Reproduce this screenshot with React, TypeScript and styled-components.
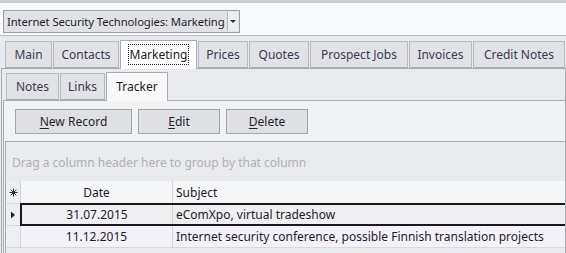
import styled, {createGlobalStyle} from "styled-components";

const GlobalStyle = createGlobalStyle`
  html, body {
    margin: 0;
    padding: 0;
    width: 566px;
    height: 253px;
    overflow: hidden;
    background: #e9eaed;
    font-family: "Noto Sans", "Open Sans", sans-serif;
    font-size: 12px;
    color: #2b2b3a;
  }
`;

const Window = styled.div`
  width: 566px;
  height: 253px;
  display: flex;
  flex-direction: column;
`;

const TopBar = styled.div`
  border-top: 3px solid #c9ccd1;
  border-bottom: 1px solid #b7bac0;
  background: #f8f9fa;
  padding: 7px 0 0 3px;
  box-sizing: border-box;
  height: 36px;
`;

const Combo = styled.div`
  width: 237px;
  height: 23px;
  box-sizing: border-box;
  border: 1px solid #9a9ea6;
  background: #e0e2e6;
  display: flex;
  align-items: center;
`;

const ComboText = styled.span`
  flex: 1;
  padding-left: 3px;
  white-space: nowrap;
  font-size: 11.3px;
  letter-spacing: -0.1px;
  color: #1f1f2e;
`;

const ComboButton = styled.span`
  width: 10px;
  height: 19px;
  margin-right: 1px;
  border-left: 1px solid #b3b6bc;
  background: #eceef1;
  display: flex;
  align-items: center;
  justify-content: center;

  &::after {
    content: "";
    border-left: 3px solid transparent;
    border-right: 3px solid transparent;
    border-top: 3px solid #333;
  }
`;

const TabStrip = styled.div<{ $indent: number; $height: number }>`
  display: flex;
  align-items: flex-end;
  gap: 1px;
  padding-left: ${props => props.$indent}px;
  height: ${props => props.$height}px;
  position: relative;
  z-index: 1;
`;

const Tab = styled.div<{ $active?: boolean; $width: number; $tall: number; $activeBg: string }>`
  width: ${props => props.$width}px;
  height: ${props => props.$active ? props.$tall + 2 : props.$tall}px;
  box-sizing: border-box;
  border: 1px solid ${props => props.$active ? "#a9acb2" : "#b6b9bf"};
  border-bottom: ${props => props.$active ? "none" : "1px solid #a9acb2"};
  background: ${props => props.$active ? props.$activeBg : "#e1e2e6"};
  margin-bottom: ${props => props.$active ? -1 : 0}px;
  display: flex;
  align-items: center;
  justify-content: center;
  white-space: nowrap;
  color: ${props => props.$active ? "#1a1a26" : "#3a3a52"};
  padding-bottom: ${props => props.$active ? 2 : 0}px;
`;

const FocusLabel = styled.span`
  outline: 1px dotted #222;
  padding: 0 1px;
  line-height: 19px;
`;

const Panel = styled.div<{ $bg: string; $margin: string }>`
  flex: 1;
  margin: ${props => props.$margin};
  border: 1px solid #a9acb2;
  border-bottom: none;
  background: ${props => props.$bg};
  display: flex;
  flex-direction: column;
  min-width: 0;
`;

const InnerPanel = styled(Panel)`
  border-right: none;
`;

const Toolbar = styled.div`
  display: flex;
  gap: 6px;
  padding: 8px 0 7px 11px;
`;

const Button = styled.div<{ $width: number }>`
  width: ${props => props.$width}px;
  height: 25px;
  box-sizing: border-box;
  border: 1px solid #a2a5ac;
  background: #dfe0e4;
  display: flex;
  align-items: center;
  justify-content: center;
  color: #1f1f2e;

  u {
    text-decoration-thickness: 1px;
    text-underline-offset: 2px;
  }
`;

const Grid = styled.div`
  flex: 1;
  margin: 0 0 0 1px;
  border: 1px solid #a5a8ae;
  border-right: none;
  border-bottom: none;
  background: #e9eaed;
  display: flex;
  flex-direction: column;
`;

const GroupPanel = styled.div`
  height: 39px;
  padding: 12px 0 0 6px;
  box-sizing: border-box;
  color: #aeb1b7;
  white-space: nowrap;
`;

const Row = styled.div<{ $bg: string; $height: number }>`
  display: grid;
  grid-template-columns: 15px 152px 1fr;
  height: ${props => props.$height}px;
  background: ${props => props.$bg};
  border-bottom: 1px solid #d7d9dd;
`;

const Cell = styled.div<{ $align?: string }>`
  display: flex;
  align-items: center;
  justify-content: ${props => props.$align || "flex-start"};
  padding-left: ${props => props.$align === "center" ? 0 : 3}px;
  border-right: 1px solid #d3d5da;
  white-space: nowrap;
  overflow: hidden;
  color: #1c1c28;
  &:last-child {
    border-right: none;
  }
`;

const Indicator = styled.div`
  display: flex;
  align-items: center;
  justify-content: center;
  border-right: 1px solid #d3d5da;
  background: #eeeff2;
`;

const SelectedCells = styled.div`
  grid-column: 2 / 4;
  display: grid;
  grid-template-columns: 151px 1fr;
  border: 2px solid #1a1a1a;
  border-right: none;
  margin: -1px 0 -1px -1px;
  background: #efeff2;
`;

const tabs = [
    {name: "Main", w: 47},
    {name: "Contacts", w: 66},
    {name: "Marketing", w: 77, active: true},
    {name: "Prices", w: 50},
    {name: "Quotes", w: 60},
    {name: "Prospect Jobs", w: 98},
    {name: "Invoices", w: 63},
    {name: "Credit Notes", w: 92},
];

const subTabs = [
    {name: "Notes", w: 53},
    {name: "Links", w: 45},
    {name: "Tracker", w: 62, active: true},
];

function App() {
    return (
        <Window>
            <GlobalStyle/>
            <TopBar>
                <Combo>
                    <ComboText>Internet Security Technologies: Marketing</ComboText>
                    <ComboButton/>
                </Combo>
            </TopBar>
            <TabStrip $indent={5} $height={32}>
                {tabs.map(t =>
                    <Tab key={t.name} $width={t.w} $tall={27} $active={t.active} $activeBg="#ffffff">
                        {t.active ? <FocusLabel>{t.name}</FocusLabel> : t.name}
                    </Tab>
                )}
            </TabStrip>
            <Panel $bg="#e9eaed" $margin="0 0 0 1px">
                <TabStrip $indent={4} $height={31}>
                    {subTabs.map(t =>
                        <Tab key={t.name} $width={t.w} $tall={27} $active={t.active} $activeBg="#f9f9fa">
                            {t.name}
                        </Tab>
                    )}
                </TabStrip>
                <InnerPanel $bg="#f1f2f4" $margin="0 0 0 1px">
                    <Toolbar>
                        <Button $width={117}><span><u>N</u>ew Record</span></Button>
                        <Button $width={82}><span><u>E</u>dit</span></Button>
                        <Button $width={82}><span><u>D</u>elete</span></Button>
                    </Toolbar>
                    <Grid>
                        <GroupPanel>Drag a column header here to group by that column</GroupPanel>
                        <Row $bg="#f5f6f8" $height={22}>
                            <Indicator>
                                <svg width="9" height="9" viewBox="0 0 9 9">
                                    <path d="M4.5 0.5v8M0.5 4.5h8M1.7 1.7l5.6 5.6M7.3 1.7l-5.6 5.6" stroke="#333" strokeWidth="1"/>
                                </svg>
                            </Indicator>
                            <Cell $align="center">Date</Cell>
                            <Cell>Subject</Cell>
                        </Row>
                        <Row $bg="#efeff2" $height={21}>
                            <Indicator>
                                <svg width="6" height="8" viewBox="0 0 6 8">
                                    <path d="M1 0.5L5 4L1 7.5Z" fill="#222"/>
                                </svg>
                            </Indicator>
                            <SelectedCells>
                                <Cell $align="center">31.07.2015</Cell>
                                <Cell>eComXpo, virtual tradeshow</Cell>
                            </SelectedCells>
                        </Row>
                        <Row $bg="#f4f1fb" $height={21}>
                            <Indicator/>
                            <Cell $align="center">11.12.2015</Cell>
                            <Cell>Internet security conference, possible Finnish translation projects</Cell>
                        </Row>
                    </Grid>
                </InnerPanel>
            </Panel>
        </Window>
    );
}

export default App;
